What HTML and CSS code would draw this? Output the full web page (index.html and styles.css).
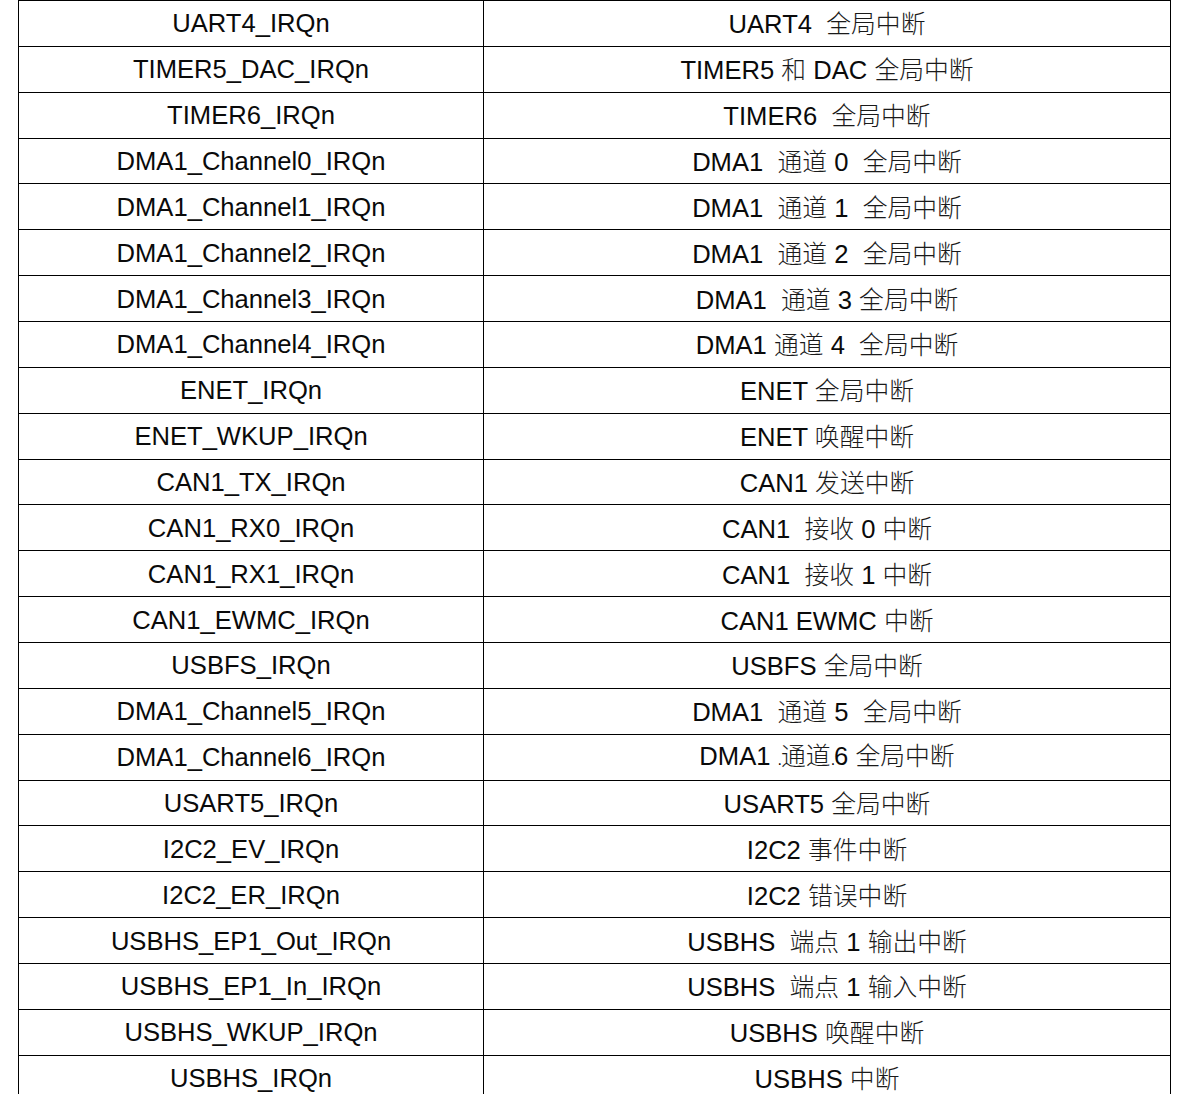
FILE: index.html
```html
<!DOCTYPE html>
<html lang="zh-CN">
<head>
<meta charset="utf-8">
<title>中断向量表</title>
<link rel="stylesheet" href="styles.css">
</head>
<body>
<table class="irq">
<tbody>
<tr><td>UART4_IRQn</td><td>UART4  <span class="zh">全局中断</span></td></tr>
<tr><td>TIMER5_DAC_IRQn</td><td>TIMER5 <span class="zh">和</span> DAC <span class="zh">全局中断</span></td></tr>
<tr><td>TIMER6_IRQn</td><td>TIMER6  <span class="zh">全局中断</span></td></tr>
<tr><td>DMA1_Channel0_IRQn</td><td>DMA1  <span class="zh">通道</span> 0  <span class="zh">全局中断</span></td></tr>
<tr><td>DMA1_Channel1_IRQn</td><td>DMA1  <span class="zh">通道</span> 1  <span class="zh">全局中断</span></td></tr>
<tr><td>DMA1_Channel2_IRQn</td><td>DMA1  <span class="zh">通道</span> 2  <span class="zh">全局中断</span></td></tr>
<tr><td>DMA1_Channel3_IRQn</td><td>DMA1  <span class="zh">通道</span> 3 <span class="zh">全局中断</span></td></tr>
<tr><td>DMA1_Channel4_IRQn</td><td>DMA1 <span class="zh">通道</span> 4  <span class="zh">全局中断</span></td></tr>
<tr><td>ENET_IRQn</td><td>ENET <span class="zh">全局中断</span></td></tr>
<tr><td>ENET_WKUP_IRQn</td><td>ENET <span class="zh">唤醒中断</span></td></tr>
<tr><td>CAN1_TX_IRQn</td><td>CAN1 <span class="zh">发送中断</span></td></tr>
<tr><td>CAN1_RX0_IRQn</td><td>CAN1  <span class="zh">接收</span> 0 <span class="zh">中断</span></td></tr>
<tr><td>CAN1_RX1_IRQn</td><td>CAN1  <span class="zh">接收</span> 1 <span class="zh">中断</span></td></tr>
<tr><td>CAN1_EWMC_IRQn</td><td>CAN1 EWMC <span class="zh">中断</span></td></tr>
<tr><td>USBFS_IRQn</td><td>USBFS <span class="zh">全局中断</span></td></tr>
<tr><td>DMA1_Channel5_IRQn</td><td>DMA1  <span class="zh">通道</span> 5  <span class="zh">全局中断</span></td></tr>
<tr><td>DMA1_Channel6_IRQn</td><td>DMA1 <span class="dot">.</span><span class="zh">通道</span><span class="dot">.</span>6 <span class="zh">全局中断</span></td></tr>
<tr><td>USART5_IRQn</td><td>USART5 <span class="zh">全局中断</span></td></tr>
<tr><td>I2C2_EV_IRQn</td><td>I2C2 <span class="zh">事件中断</span></td></tr>
<tr><td>I2C2_ER_IRQn</td><td>I2C2 <span class="zh">错误中断</span></td></tr>
<tr><td>USBHS_EP1_Out_IRQn</td><td>USBHS  <span class="zh">端点</span> 1 <span class="zh">输出中断</span></td></tr>
<tr><td>USBHS_EP1_In_IRQn</td><td>USBHS  <span class="zh">端点</span> 1 <span class="zh">输入中断</span></td></tr>
<tr><td>USBHS_WKUP_IRQn</td><td>USBHS <span class="zh">唤醒中断</span></td></tr>
<tr><td>USBHS_IRQn</td><td>USBHS <span class="zh">中断</span></td></tr>
</tbody>
</table>
</body>
</html>
```
FILE: styles.css
```css
html, body {
  margin: 0;
  padding: 0;
  background: #ffffff;
}

body {
  font-family: "Liberation Sans", Arial, "Noto Sans CJK SC", sans-serif;
  color: #000000;
}

.irq {
  border-collapse: collapse;
  margin-left: 18px;
  width: 1153px;
  table-layout: fixed;
}

.irq td {
  border: 1px solid #000000;
  height: 44.87px;
  padding: 0;
  text-align: center;
  vertical-align: middle;
  font-size: 25.6px;
  line-height: 28px;
  white-space: pre;
  color: #0a0a0a;
}

.irq td:first-child {
  width: 464px;
}

.zh {
  font-family: "Noto Sans CJK SC", sans-serif;
  font-weight: 300;
  font-size: 24.8px;
  color: #1a1a1a;
}

.dot {
  font-size: 16px;
  letter-spacing: -1px;
}
```
